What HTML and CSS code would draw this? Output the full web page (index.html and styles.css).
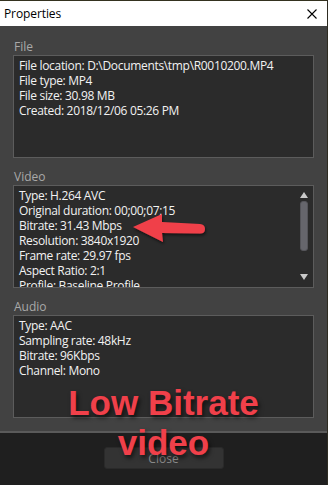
FILE: index.html
```html
<!DOCTYPE html>
<html>
<head>
<meta charset="utf-8">
<link rel="stylesheet" href="styles.css">
</head>
<body>
<div class="window">
  <div class="titlebar">
    <span class="title">Properties</span>
    <svg class="close-x" width="10" height="10" viewBox="0 0 10 10"><path d="M0.5 0.5L9.5 9.5M9.5 0.5L0.5 9.5" stroke="#000" stroke-width="1.1" fill="none"/></svg>
  </div>
  <div class="content">
    <div class="section">
      <div class="label">File</div>
      <div class="box">
        <div class="line">File location: D:\Documents\tmp\R0010200.MP4</div>
        <div class="line">File type: MP4</div>
        <div class="line">File size: 30.98 MB</div>
        <div class="line">Created: 2018/12/06 05:26 PM</div>
      </div>
    </div>
    <div class="section">
      <div class="label">Video</div>
      <div class="box scrollbox">
        <div class="lines">
          <div class="line">Type: H.264 AVC</div>
          <div class="line">Original duration: 00;00;07;15</div>
          <div class="line">Bitrate: 31.43 Mbps</div>
          <div class="line">Resolution: 3840x1920</div>
          <div class="line">Frame rate: 29.97 fps</div>
          <div class="line">Aspect Ratio: 2:1</div>
          <div class="line">Profile: Baseline Profile</div>
        </div>
        <div class="scrollbar">
          <span class="arrow up"></span>
          <span class="thumb"></span>
          <span class="arrow down"></span>
        </div>
      </div>
    </div>
    <div class="section">
      <div class="label">Audio</div>
      <div class="box">
        <div class="line">Type: AAC</div>
        <div class="line">Sampling rate: 48kHz</div>
        <div class="line">Bitrate: 96Kbps</div>
        <div class="line">Channel: Mono</div>
      </div>
    </div>
  </div>
  <div class="footer">
    <button class="btn">Close</button>
  </div>
  <svg class="red-arrow" width="90" height="44" viewBox="0 0 90 44">
    <defs>
      <filter id="sh" x="-20%" y="-30%" width="140%" height="160%">
        <feDropShadow dx="1" dy="2" stdDeviation="1.5" flood-color="#000" flood-opacity="0.55"/>
      </filter>
    </defs>
    <g filter="url(#sh)" fill="#f0404a">
      <path d="M3 21 L32 8 L32 16 L70 18 Q75 18.5 75 23 Q75 27.5 70 27.5 L32 27 L33 36 Z"/>
    </g>
  </svg>
  <div class="overlay-text">Low Bitrate<br>video</div>
</div>
</body>
</html>
```
FILE: styles.css
```css
* { box-sizing: border-box; }
html, body {
  margin: 0;
  padding: 0;
  width: 328px;
  height: 485px;
  overflow: hidden;
  background: #1f1f1f;
  font-family: "Open Sans", "Noto Sans", sans-serif;
}
.window {
  position: relative;
  width: 328px;
  height: 485px;
  display: flex;
  flex-direction: column;
  border-right: 1px solid #2e2c22;
}
.titlebar {
  height: 26px;
  background: #fff;
  border-top: 1px solid #34321f;
  display: flex;
  align-items: center;
  justify-content: space-between;
  padding: 0 10px 0 4px;
}
.title {
  font-size: 12px;
  color: #000;
  letter-spacing: -0.1px;
}
.close-x { display: block; }
.content {
  background: #424242;
  padding: 12px 13px 13px 13px;
  display: flex;
  flex-direction: column;
  gap: 10px;
  border-bottom: 2px solid #5a5a5a;
}
.label {
  font-size: 12px;
  line-height: 17px;
  color: #a9a9a9;
  padding-left: 1px;
}
.box {
  height: 103px;
  background: #2b2b2b;
  border: 1px solid #5c5c5c;
  padding: 2px 5px;
  overflow: hidden;
}
.line {
  font-size: 12px;
  line-height: 15px;
  color: #f2f2f2;
  white-space: nowrap;
  letter-spacing: -0.32px;
}
.scrollbox {
  display: flex;
  padding-right: 0;
}
.lines { flex: 1; }
.scrollbar {
  width: 18px;
  display: flex;
  flex-direction: column;
  align-items: center;
  padding-top: 4px;
}
.arrow {
  width: 0;
  height: 0;
  border-left: 4px solid transparent;
  border-right: 4px solid transparent;
}
.arrow.up { border-bottom: 6px solid #c9c9c9; }
.arrow.down { border-top: 6px solid #c9c9c9; margin-top: auto; margin-bottom: 5px; }
.thumb {
  width: 8px;
  height: 50px;
  margin-top: 3px;
  border-radius: 3px;
  background: #66666c;
  border: 1px solid #55555a;
}
.footer {
  flex: 1;
  display: flex;
  justify-content: center;
  align-items: flex-start;
  padding-top: 14px;
}
.btn {
  width: 120px;
  height: 22px;
  background: #333333;
  border: 1px solid #2a2a2a;
  border-radius: 3px;
  color: #8a8a8a;
  font-family: inherit;
  font-size: 12px;
  padding: 0;
}
.red-arrow {
  position: absolute;
  left: 130px;
  top: 206px;
}
.overlay-text {
  position: absolute;
  left: 0;
  right: 0;
  top: 383px;
  text-align: center;
  font-family: "Liberation Sans", Arial, sans-serif;
  font-weight: bold;
  font-size: 35px;
  line-height: 40px;
  color: #f0404a;
  text-shadow: 2px 3px 4px rgba(0,0,0,0.6);
}
```
